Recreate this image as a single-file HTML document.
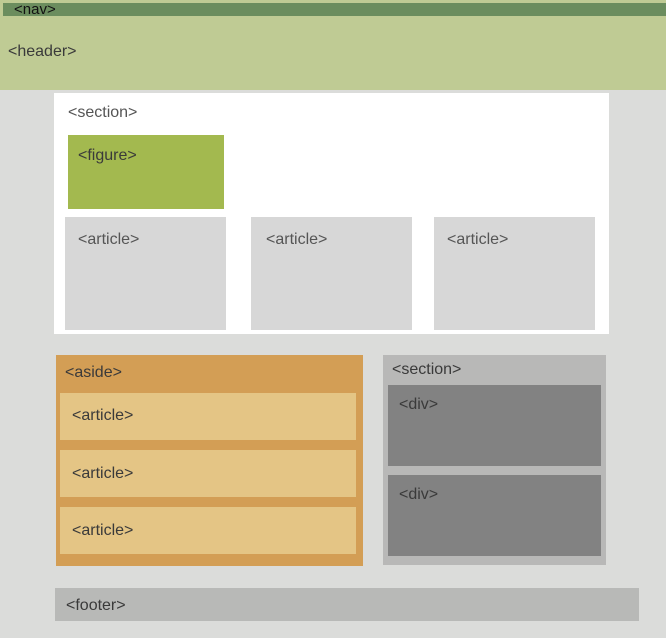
<!DOCTYPE html><html><head><style>
body{margin:0;width:666px;height:638px;background:#dbdcda;position:relative;overflow:hidden;font-family:"Liberation Sans",sans-serif;font-size:16px;color:#3a3a3a}
div{position:absolute;box-sizing:border-box;line-height:21px}
</style></head><body>
<div style="left:0;top:0;width:666px;height:90px;background:#bfcb94"></div>
<div style="left:3px;top:3px;width:663px;height:13px;background:#6b8d5e;color:#111;line-height:13px;padding-left:11px;font-size:15px">&lt;nav&gt;</div>
<div style="left:8px;top:41px">&lt;header&gt;</div>
<div style="left:54px;top:93px;width:555px;height:241px;background:#fff"></div>
<div style="left:68px;top:102px;color:#555">&lt;section&gt;</div>
<div style="left:68px;top:135px;width:156px;height:74px;background:#a3b94f;padding:10px 0 0 10px">&lt;figure&gt;</div>
<div style="left:65px;top:217px;width:161px;height:113px;background:#d7d7d7;padding:12px 0 0 13px;color:#555">&lt;article&gt;</div>
<div style="left:251px;top:217px;width:161px;height:113px;background:#d7d7d7;padding:12px 0 0 15px;color:#555">&lt;article&gt;</div>
<div style="left:434px;top:217px;width:161px;height:113px;background:#d7d7d7;padding:12px 0 0 13px;color:#555">&lt;article&gt;</div>
<div style="left:56px;top:355px;width:307px;height:211px;background:#d39e55;padding:7px 0 0 9px">&lt;aside&gt;</div>
<div style="left:60px;top:393px;width:296px;height:47px;background:#e4c585;padding:12px 0 0 12px">&lt;article&gt;</div>
<div style="left:60px;top:450px;width:296px;height:47px;background:#e4c585;padding:13px 0 0 12px">&lt;article&gt;</div>
<div style="left:60px;top:507px;width:296px;height:47px;background:#e4c585;padding:13px 0 0 12px">&lt;article&gt;</div>
<div style="left:383px;top:355px;width:223px;height:210px;background:#b8b8b7;padding:4px 0 0 9px">&lt;section&gt;</div>
<div style="left:388px;top:385px;width:213px;height:81px;background:#828282;padding:9px 0 0 11px">&lt;div&gt;</div>
<div style="left:388px;top:475px;width:213px;height:81px;background:#828282;padding:9px 0 0 11px">&lt;div&gt;</div>
<div style="left:55px;top:588px;width:584px;height:33px;background:#b8b9b7;padding:7px 0 0 11px">&lt;footer&gt;</div>
</body></html>
